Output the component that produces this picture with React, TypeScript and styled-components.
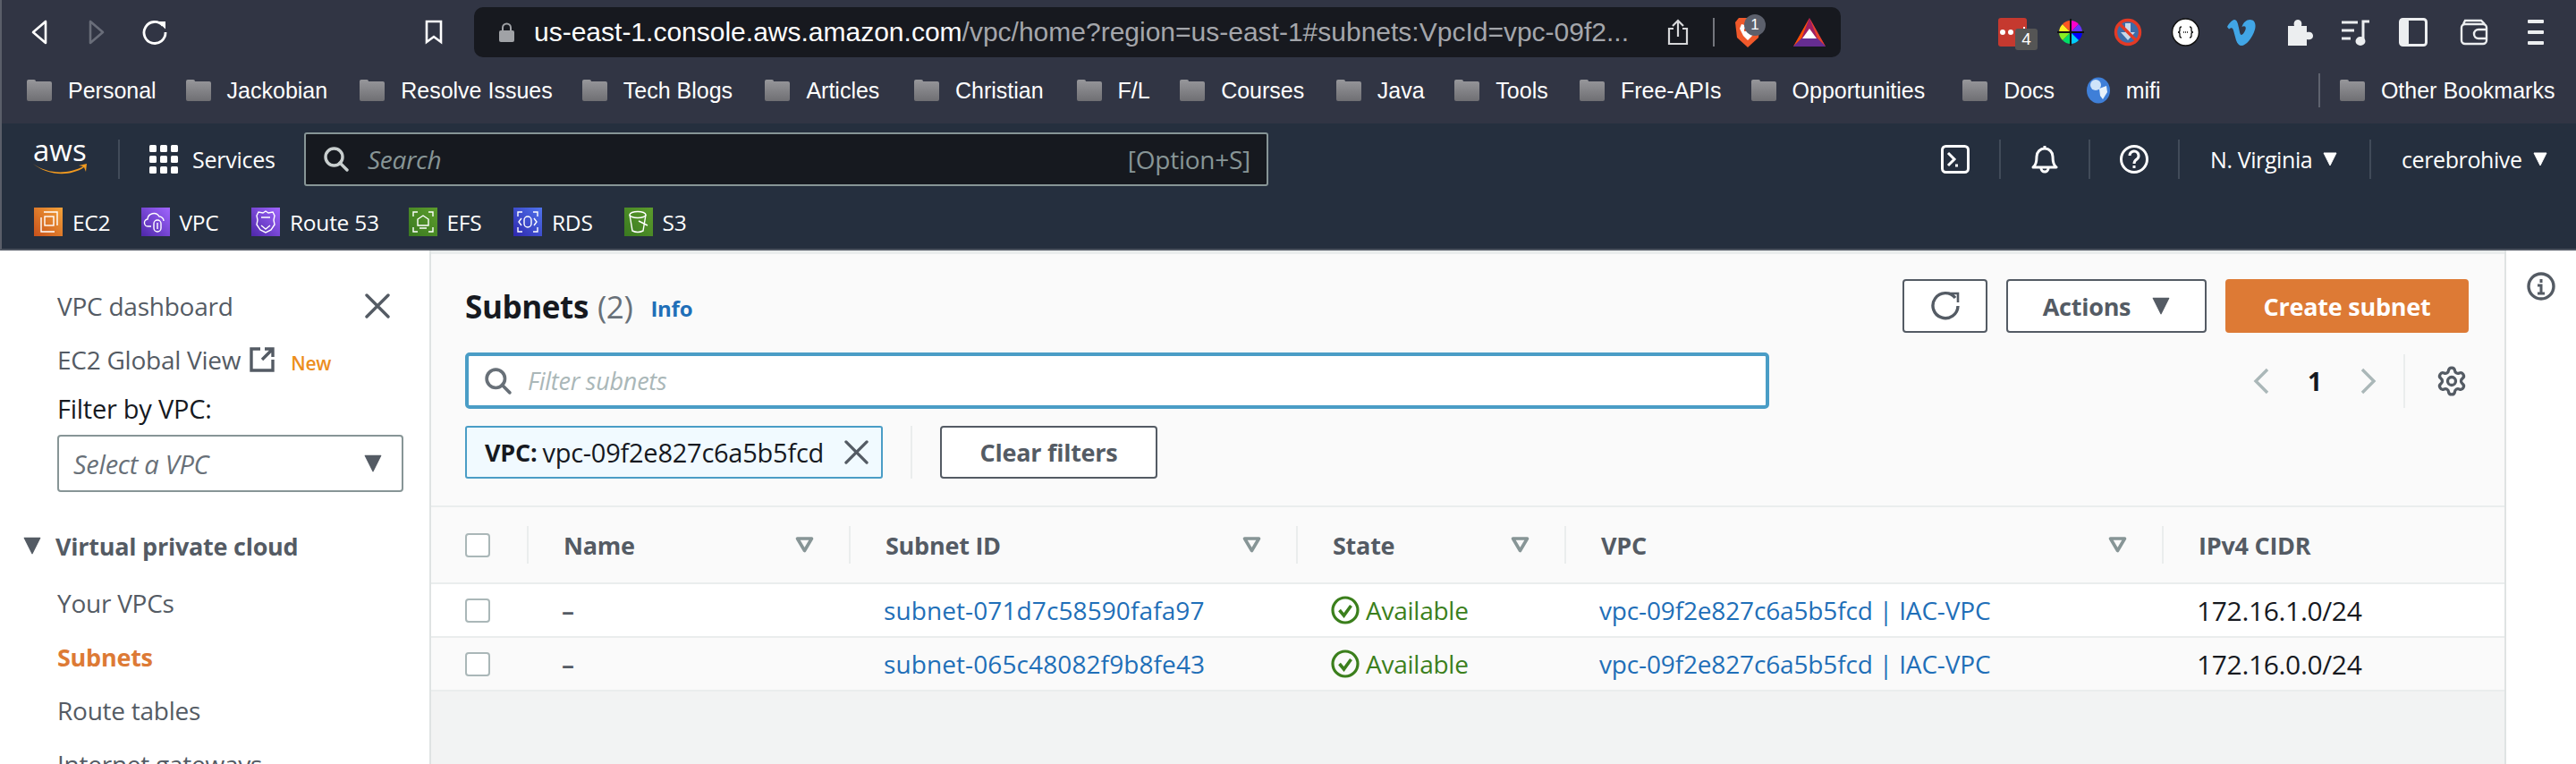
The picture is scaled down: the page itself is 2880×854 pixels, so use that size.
import { ReactElement, ReactNode } from 'react';
import { Settings } from 'lucide-react';
import styled, { createGlobalStyle } from 'styled-components';

const GlobalStyle = createGlobalStyle`
  html, body {
    margin: 0;
    padding: 0;
    background: #fff;
  }
  * {
    box-sizing: border-box;
  }
`;

const ui = `'Open Sans', 'Noto Sans', sans-serif`;
const chromeFont = `'Liberation Sans', Arial, sans-serif`;

const Page = styled.div`
  width: 2880px;
  height: 854px;
  overflow: hidden;
  display: flex;
  flex-direction: column;
  font-family: ${ui};
  font-size: 28px;
  letter-spacing: -0.25px;
  color: #16191f;
`;

/* browser chrome */
const BrowserChrome = styled.div`
  height: 138px;
  flex: none;
  background: #313544;
  border-left: 2px solid #5a5e69;
  display: flex;
  flex-direction: column;
`;

const Toolbar = styled.div`
  height: 64px;
  display: flex;
  align-items: flex-end;
  position: relative;
`;

const NavIcons = styled.div`
  width: 528px;
  height: 56px;
  flex: none;
  display: flex;
  align-items: center;
  padding-left: 32px;
  gap: 44px;
`;

const ReloadIcon = styled.svg`
  margin-left: -3px;
`;

const BookmarkIcon = styled.svg`
  margin-left: 243px;
`;

const UrlBar = styled.div`
  width: 1528px;
  height: 56px;
  flex: none;
  background: #17191f;
  border-radius: 10px;
  display: flex;
  align-items: center;
  padding-left: 28px;
  font-family: ${chromeFont};
  font-size: 30px;
  letter-spacing: 0;
  white-space: nowrap;
  color: #a4a6ab;

  b {
    font-weight: 400;
    color: #fff;
  }
`;

const UrlText = styled.span`
  margin-left: 22px;
  width: 1232px;
  flex: none;
`;

const UrlIcons = styled.div`
  display: flex;
  align-items: center;
  margin-left: 8px;
  height: 100%;
  position: relative;
`;

const ShareIcon = styled.svg`
  margin-left: 27px;
`;

const UrlDivider = styled.div`
  width: 2px;
  height: 32px;
  background: #74767d;
  margin: 0 22px 0 27px;
`;

const BraveBadge = styled.span`
  position: absolute;
  left: 113px;
  top: 8px;
  width: 24px;
  height: 24px;
  border-radius: 50%;
  background: #5c606c;
  color: #fff;
  font-size: 17px;
  line-height: 24px;
  text-align: center;
`;

const BatIcon = styled.svg`
  margin-left: 36px;
`;

const ExtIcons = styled.div`
  display: flex;
  align-items: center;
  height: 56px;
  padding-left: 176px;
`;

const ExtSlot = styled.div<{ $w: number }>`
  width: ${({ $w }) => $w}px;
  flex: none;
  display: flex;
  align-items: center;
  position: relative;
`;

const CountBadge = styled.span`
  position: absolute;
  left: 19px;
  top: 12px;
  width: 25px;
  height: 24px;
  background: #555;
  border-radius: 3px;
  color: #fff;
  font-family: ${chromeFont};
  font-size: 19px;
  line-height: 24px;
  text-align: center;
`;

const BookmarkBar = styled.div`
  height: 74px;
  display: flex;
  align-items: center;
  padding-left: 27px;
  gap: 34.600px;
  font-family: ${chromeFont};
  font-size: 25px;
  letter-spacing: 0;
  color: #fff;
`;

const Bookmark = styled.div`
  display: flex;
  align-items: center;
  gap: 17px;
  white-space: nowrap;
`;

const BookmarkName = styled.span<{ $w: number }>`
  width: ${({ $w }) => $w}px;
  flex: none;
`;

const BookmarkDivider = styled.div`
  width: 2px;
  height: 38px;
  background: #5e626e;
  margin-left: 140px;
  margin-right: -14px;
`;

/* aws console header */
const AwsHeader = styled.header`
  height: 142px;
  flex: none;
  background: #252f3e;
  border-left: 2px solid #5a5e69;
  border-bottom: 2px solid #4d5460;
  color: #fff;
  display: flex;
  flex-direction: column;
`;

const TopNav = styled.div`
  height: 80px;
  display: flex;
  align-items: center;
  padding-left: 34px;
`;

const AwsLogo = styled.div`
  width: 64px;
  height: 44px;
  position: relative;
  flex: none;
`;

const AwsWord = styled.span`
  position: absolute;
  left: 1px;
  top: -8px;
  font-size: 33px;
  line-height: 40px;
  letter-spacing: 0;
  color: #fff;
`;

const AwsSmile = styled.svg`
  position: absolute;
  left: 0;
  top: 24px;
`;

const NavDivider = styled.div<{ $ml?: number; $mr?: number }>`
  width: 2px;
  height: 44px;
  background: #414b59;
  flex: none;
  margin-left: ${({ $ml }) => $ml ?? 0}px;
  margin-right: ${({ $mr }) => $mr ?? 0}px;
`;

const ServicesLink = styled.div`
  display: flex;
  align-items: center;
  gap: 16px;
  font-size: 25px;
  width: 173px;
  flex: none;
`;

const SearchBox = styled.div`
  width: 1078px;
  height: 60px;
  flex: none;
  background: #16191f;
  border: 2px solid #879596;
  border-radius: 3px;
  display: flex;
  align-items: center;
  padding: 0 18px 0 20px;
  color: #879596;
`;

const SearchWord = styled.span`
  margin-left: 21px;
  font-style: italic;
`;

const Shortcut = styled.span`
  margin-left: auto;
`;

const NavRight = styled.div`
  display: flex;
  align-items: center;
  margin-left: 752px;
`;

const NavIconSlot = styled.div<{ $w: number }>`
  width: ${({ $w }) => $w}px;
  flex: none;
  display: flex;
  justify-content: center;
`;

const NavMenu = styled.div<{ $w: number; $pl: number }>`
  width: ${({ $w }) => $w}px;
  padding-left: ${({ $pl }) => $pl}px;
  flex: none;
  display: flex;
  align-items: center;
  gap: 12px;
  font-size: 25px;
  letter-spacing: -0.4px;
  white-space: nowrap;
`;

const Favorites = styled.div`
  height: 60px;
  display: flex;
  align-items: center;
  padding-left: 36px;
  gap: 36.500px;
  font-size: 24.500px;
`;

const Favorite = styled.div`
  display: flex;
  align-items: center;
  gap: 11px;
`;

const FavoriteName = styled.span<{ $w: number }>`
  width: ${({ $w }) => $w}px;
  flex: none;
  white-space: nowrap;
`;

const ServiceIcon = styled.div<{ $from: string; $to: string }>`
  width: 32px;
  height: 32px;
  flex: none;
  background: linear-gradient(45deg, ${({ $from }) => $from}, ${({ $to }) => $to});
  display: flex;
  align-items: center;
  justify-content: center;
`;

/* console body */
const Body = styled.div`
  flex: 1;
  min-height: 0;
  display: flex;
  background: #fff;
`;

const Sidebar = styled.nav`
  width: 482px;
  flex: none;
  background: #fff;
  border-right: 2px solid #dfe3e3;
  padding-top: 32px;
  color: #545b64;
  position: relative;
`;

const SideItem = styled.div<{ $active?: boolean }>`
  height: 60px;
  padding-left: 64px;
  display: flex;
  align-items: center;
  font-size: ${({ $active }) => ($active ? 27 : 28)}px;
  font-weight: ${({ $active }) => ($active ? 700 : 400)};
  color: ${({ $active }) => ($active ? '#dd7a35' : '#545b64')};
`;

const CloseX = styled.div`
  margin-left: auto;
  margin-right: 44px;
  display: flex;
`;

const ExternalWrap = styled.span`
  margin-left: 10px;
  display: flex;
`;

const NewTag = styled.span`
  margin-left: 18px;
  margin-top: 8px;
  color: #ec8e1e;
  font-size: 21px;
  font-weight: 600;
`;

const FilterLabel = styled.div`
  height: 48px;
  padding-left: 64px;
  display: flex;
  align-items: center;
  font-size: 29px;
  color: #16191f;
`;

const VpcSelect = styled.div`
  width: 387px;
  height: 64px;
  margin: 6px 0 30px 64px;
  border: 2px solid #879596;
  border-radius: 4px;
  display: flex;
  align-items: center;
  justify-content: space-between;
  padding: 0 22px 0 16px;
  font-size: 29px;
  font-style: italic;
  color: #687078;
`;

const SideGroup = styled.div`
  height: 60px;
  margin-bottom: 4px;
  padding-left: 26px;
  display: flex;
  align-items: center;
  gap: 16px;
  font-size: 27px;
  font-weight: 700;
  color: #545b64;
`;

const Main = styled.main`
  width: 2318px;
  flex: none;
  background: #f2f3f3;
  border-top: 4px solid #eaeded;
  display: flex;
  flex-direction: column;
`;

const MainHead = styled.div`
  height: 281px;
  flex: none;
  background: #fafafa;
  padding: 28px 40px 0 38px;
  display: flex;
  flex-direction: column;
`;

const TitleRow = styled.div`
  height: 60px;
  display: flex;
  align-items: center;
`;

const Title = styled.h1`
  margin: 0;
  font-size: 35px;
  font-weight: 700;
  letter-spacing: -0.4px;
  color: #16191f;

  span {
    font-weight: 400;
    color: #687078;
    margin-left: 10px;
  }
`;

const InfoLink = styled.a`
  margin: 4px 0 0 20px;
  font-size: 24px;
  font-weight: 700;
  color: #1f6fb8;
`;

const TitleActions = styled.div`
  margin-left: auto;
  display: flex;
  gap: 21px;
`;

const OutlineButton = styled.button<{ $w: number; $h?: number }>`
  width: ${({ $w }) => $w}px;
  height: ${({ $h }) => $h ?? 60}px;
  background: #fff;
  border: 2px solid #545b64;
  border-radius: 4px;
  display: flex;
  align-items: center;
  justify-content: center;
  gap: 24px;
  padding: 0;
  font-family: inherit;
  font-size: 27px;
  font-weight: 700;
  letter-spacing: -0.25px;
  color: #545b64;
`;

const PrimaryButton = styled(OutlineButton)`
  background: #dd7a35;
  border-color: #dd7a35;
  color: #fff;
`;

const FilterRow = styled.div`
  height: 63px;
  margin-top: 22px;
  display: flex;
  align-items: center;
`;

const FilterInput = styled.div`
  width: 1458px;
  height: 63px;
  flex: none;
  background: #fff;
  border: 4px solid #4a9dc6;
  border-radius: 5px;
  display: flex;
  align-items: center;
  gap: 18px;
  padding-left: 18px;
  font-size: 27px;
  font-style: italic;
  color: #aab7b8;
`;

const Pager = styled.div`
  margin-left: auto;
  padding-right: 1px;
  display: flex;
  align-items: center;
`;

const PageNum = styled.span`
  width: 102px;
  text-align: center;
  font-weight: 700;
`;

const PagerDivider = styled.div`
  width: 2px;
  height: 60px;
  background: #eaeded;
  margin: 0 34px 0 30px;
`;

const TokenRow = styled.div`
  height: 59px;
  margin-top: 19px;
  display: flex;
  align-items: center;
`;

const Token = styled.div`
  width: 467px;
  height: 59px;
  flex: none;
  background: #f1faff;
  border: 2px solid #4a9dc6;
  border-radius: 3px;
  display: flex;
  align-items: center;
  padding: 0 14px 0 20px;
  font-size: 29px;
  white-space: nowrap;

  b {
    font-size: 27px;
    margin-right: 6px;
  }

  svg {
    margin-left: auto;
  }
`;

const TokenDivider = styled.div`
  width: 2px;
  height: 59px;
  background: #eaeded;
  margin: 0 31px;
  flex: none;
`;

const columns = '107px 360px 500px 300px 668px 383px';

const TableHead = styled.div`
  height: 88px;
  flex: none;
  background: #fafafa;
  border-top: 2px solid #eaeded;
  border-bottom: 2px solid #eaeded;
  display: grid;
  grid-template-columns: ${columns};
  align-items: center;
  font-size: 27px;
  font-weight: 700;
  color: #545b64;
`;

const HeadCell = styled.div<{ $divider?: boolean }>`
  height: 42px;
  display: flex;
  align-items: center;
  justify-content: space-between;
  padding: 0 39px 0 39px;
  border-left: 2px solid ${({ $divider }) => ($divider ? '#eaeded' : 'transparent')};
  white-space: nowrap;
`;

const CheckCell = styled.div`
  padding-left: 38px;
  display: flex;
`;

const CheckBox = styled.div`
  width: 28px;
  height: 27px;
  background: #fff;
  border: 2px solid #aab7b8;
  border-radius: 4px;
`;

const Row = styled.div<{ $alt?: boolean }>`
  height: 60px;
  flex: none;
  background: ${({ $alt }) => ($alt ? '#fafafa' : '#fff')};
  border-bottom: 2px solid #eaeded;
  display: grid;
  grid-template-columns: ${columns};
  align-items: center;
`;

const Cell = styled.div`
  padding-left: 39px;
  display: flex;
  align-items: center;
  gap: 7px;
  white-space: nowrap;
`;

const Dash = styled.span`
  font-weight: 600;
  color: #545b64;
`;

const LinkText = styled.a<{ $spacing: number }>`
  letter-spacing: ${({ $spacing }) => $spacing}px;
  color: #1f6fb8;
`;

const Status = styled.span`
  color: #3b7f1c;
`;

const Cidr = styled.span`
  font-size: 30px;
  letter-spacing: -0.35px;
`;

const HelpRail = styled.aside`
  width: 80px;
  flex: none;
  background: #fff;
  border-left: 2px solid #dfe3e3;
  padding: 24px 0 0 23px;
`;

/* icons */
const Folder = (): ReactElement => (
  <svg width="30" height="26" viewBox="0 0 30 26">
    <defs>
      <linearGradient id="fold" x1="0" y1="0" x2="0" y2="1">
        <stop offset="0" stopColor="#97979b" />
        <stop offset="1" stopColor="#6f6f73" />
      </linearGradient>
    </defs>
    <path d="M1 3q0-2 2-2h6q2 0 2 2h16q2 0 2 2v18q0 2-2 2H3q-2 0-2-2z" fill="url(#fold)" />
  </svg>
);

const Globe = (): ReactElement => (
  <svg width="28" height="30" viewBox="0 0 28 30">
    <ellipse cx="14" cy="15" rx="13" ry="14.500" fill="#3f7fd8" />
    <ellipse cx="11" cy="9" rx="6" ry="6" fill="#cfe4fa" />
    <path d="M15 13l8-3 1 7-5 8-3-4z" fill="#e8f2fb" />
  </svg>
);

const Caret = ({ size = 16, color = '#fff' }: { size?: number; color?: string }): ReactElement => (
  <svg width={size} height={size} viewBox="0 0 16 16">
    <path d="M1 1h14L8 15z" fill={color} stroke={color} strokeLinejoin="round" />
  </svg>
);

const SearchGlass = ({ color, size = 28 }: { color: string; size?: number }): ReactElement => (
  <svg width={size} height={size} viewBox="0 0 28 28" fill="none" stroke={color} strokeWidth="3.400">
    <circle cx="11.500" cy="11.500" r="9.500" />
    <path d="M18 18l8 8" strokeLinecap="round" />
  </svg>
);

const CrossIcon = ({ size = 28 }: { size?: number }): ReactElement => (
  <svg width={size} height={size} viewBox="0 0 28 28" stroke="#545b64" strokeWidth="3.400" strokeLinecap="round">
    <path d="M2 2l24 24M26 2L2 26" />
  </svg>
);

const FilterTriangle = (): ReactElement => (
  <svg width="21" height="18" viewBox="0 0 21 18" fill="none">
    <path d="M2.500 2h16L10.500 15.500z" stroke="#879596" strokeWidth="3.600" strokeLinejoin="round" />
  </svg>
);

const CheckCircle = (): ReactElement => (
  <svg width="32" height="32" viewBox="0 0 32 32" fill="none" stroke="#3b7f1c" strokeWidth="3.200">
    <circle cx="16" cy="16" r="14" />
    <path d="M9.500 16l5 6 8-11" strokeWidth="3.600" />
  </svg>
);

const Chevron = ({ left }: { left?: boolean }): ReactElement => (
  <svg width="18" height="30" viewBox="0 0 18 30" fill="none" stroke="#aab7b8" strokeWidth="3.400">
    <path d={left ? 'M16 2L3 15l13 13' : 'M2 2l13 13L2 28'} />
  </svg>
);

const lineIcon = { fill: 'none', stroke: '#fff', strokeWidth: 1.4 };

const favorites: { name: string; w: number; from: string; to: string; art: ReactNode }[] = [
  {
    name: 'EC2',
    w: 40,
    from: '#c8511b',
    to: '#f4a33a',
    art: (
      <svg width="26" height="26" viewBox="0 0 26 26" {...lineIcon}>
        <rect x="9" y="7" width="10" height="10" />
        <path d="M8 2h15v15M5 8v16h15" />
      </svg>
    ),
  },
  {
    name: 'VPC',
    w: 44,
    from: '#4d27a8',
    to: '#a166ff',
    art: (
      <svg width="28" height="28" viewBox="0 0 28 28" {...lineIcon}>
        <path d="M9 19H6a4 4 0 0 1-1-8 7 7 0 0 1 13-3 5 5 0 0 1 5 5" />
        <rect x="12" y="12" width="8" height="13" rx="4" />
        <path d="M16 15v7" />
      </svg>
    ),
  },
  {
    name: 'Route 53',
    w: 96,
    from: '#4d27a8',
    to: '#a166ff',
    art: (
      <svg width="28" height="28" viewBox="0 0 28 28" {...lineIcon}>
        <path d="M14 2l3 2 5-1 2 4-1 5 1 5-4 6-6 3-6-3-4-6 1-5-1-5 2-4 5 1z" />
        <path d="M9 9h10M9 18l5 4 5-4" />
      </svg>
    ),
  },
  {
    name: 'EFS',
    w: 38,
    from: '#3a7a20',
    to: '#5c9c2c',
    art: (
      <svg width="28" height="28" viewBox="0 0 28 28" {...lineIcon}>
        <path d="M3 8V3h5M20 3h5v5M25 20v5h-5M8 25H3v-5" />
        <path d="M8 18v-7l6-4 6 4v7zM10 21h8" />
      </svg>
    ),
  },
  {
    name: 'RDS',
    w: 44,
    from: '#2e27ad',
    to: '#4f74ee',
    art: (
      <svg width="28" height="28" viewBox="0 0 28 28" {...lineIcon}>
        <path d="M3 8V3h5M20 3h5v5M25 20v5h-5M8 25H3v-5" />
        <rect x="10" y="8" width="8" height="12" rx="4" />
        <path d="M7 10l-3 4 3 4M21 10l3 4-3 4" />
      </svg>
    ),
  },
  {
    name: 'S3',
    w: 25,
    from: '#3a7a20',
    to: '#5c9c2c',
    art: (
      <svg width="26" height="28" viewBox="0 0 26 28" {...lineIcon}>
        <ellipse cx="12" cy="6" rx="9" ry="3.500" />
        <path d="M3 6l3 18q6 3 12 0l3-18M13 13l10 5" />
      </svg>
    ),
  },
];

const bookmarks = [
  { name: 'Personal', w: 96 },
  { name: 'Jackobian', w: 113 },
  { name: 'Resolve Issues', w: 167 },
  { name: 'Tech Blogs', w: 123 },
  { name: 'Articles', w: 85 },
  { name: 'Christian', w: 100 },
  { name: 'F/L', w: 34 },
  { name: 'Courses', w: 93 },
  { name: 'Java', w: 51 },
  { name: 'Tools', w: 58 },
  { name: 'Free-APIs', w: 110 },
  { name: 'Opportunities', w: 155 },
  { name: 'Docs', w: 57 },
];

const App = (): ReactElement => {
  return (
    <Page>
      <GlobalStyle />
      <BrowserChrome>
        <Toolbar>
          <NavIcons>
            <svg width="20" height="28" viewBox="0 0 20 28" fill="none" stroke="#fff" strokeWidth="2.600" strokeLinejoin="round">
              <path d="M17 2v24L3 14z" />
            </svg>
            <svg width="20" height="28" viewBox="0 0 20 28" fill="none" stroke="#696d79" strokeWidth="2.600" strokeLinejoin="round">
              <path d="M3 2v24l14-12z" />
            </svg>
            <ReloadIcon width="28" height="28" viewBox="0 0 28 28" fill="none" stroke="#fff" strokeWidth="2.800">
              <path d="M23 6.500A12 12 0 1 0 26 14" />
              <path d="M17 2h9v8.500z" fill="#fff" stroke="none" />
            </ReloadIcon>
            <BookmarkIcon width="22" height="28" viewBox="0 0 22 28" fill="none" stroke="#fff" strokeWidth="2.600">
              <path d="M3 2h16v23l-8-6-8 6z" />
            </BookmarkIcon>
          </NavIcons>
          <UrlBar>
            <svg width="17" height="22" viewBox="0 0 17 22">
              <path d="M4 9V6a4.500 4.500 0 0 1 9 0v3" fill="none" stroke="#a0a2a6" strokeWidth="2" />
              <rect x="0" y="9" width="17" height="13" rx="2" fill="#a0a2a6" />
            </svg>
            <UrlText>
              <b>us-east-1.console.aws.amazon.com</b>/vpc/home?region=us-east-1#subnets:VpcId=vpc-09f2...
            </UrlText>
            <UrlIcons>
              <ShareIcon width="24" height="30" viewBox="0 0 24 30" fill="none" stroke="#d6d7d9" strokeWidth="2.200">
                <path d="M7 11H2v17h20V11h-5M12 20V2M6 8l6-6 6 6" />
              </ShareIcon>
              <UrlDivider />
              <svg width="30" height="36" viewBox="0 0 30 36">
                <path d="M5 2h20l4 5-2 17-12 11L3 24 1 7z" fill="#f0592b" />
                <path d="M8 9l7 2 7-2 2 5-4 8-5 5-5-5-4-8z" fill="#fff" />
                <path d="M11 14h2v3h-2zM17 14h2v3h-2z" fill="#f0592b" />
              </svg>
              <BraveBadge>1</BraveBadge>
              <BatIcon width="36" height="32" viewBox="0 0 36 32">
                <path d="M18 0L0 32h36z" fill="#9e1f63" />
                <path d="M18 0L0 32l9-9z" fill="#ff5000" />
                <path d="M18 0l18 32-9-9z" fill="#e8412a" />
                <path d="M0 32h36l-9-9H9z" fill="#662d91" />
                <path d="M18 12l-8 11h16z" fill="#fff" />
              </BatIcon>
            </UrlIcons>
          </UrlBar>
          <ExtIcons>
            <ExtSlot $w={65}>
              <svg width="32" height="32" viewBox="0 0 32 32">
                <rect width="32" height="32" rx="3" fill="#c5392f" />
                <circle cx="5" cy="16" r="3" fill="#fff" />
                <circle cx="14" cy="16" r="3" fill="#fff" />
                <circle cx="22" cy="16" r="3" fill="#fff" />
                <rect x="28" y="10" width="2" height="12" fill="#fff" />
              </svg>
              <CountBadge>4</CountBadge>
            </ExtSlot>
            <ExtSlot $w={64}>
              <svg width="32" height="32" viewBox="0 0 32 32">
                <path d="M16 16L16 3a13 13 0 0 1 9 4z" fill="#f0c" />
                <path d="M16 16l9-9a13 13 0 0 1 4 9z" fill="#63f" />
                <path d="M16 16h13a13 13 0 0 1-4 9z" fill="#00f" />
                <path d="M16 16l9 9a13 13 0 0 1-9 4z" fill="#0cf" />
                <path d="M16 16v13a13 13 0 0 1-9-4z" fill="#0d6" />
                <path d="M16 16l-9 9a13 13 0 0 1-4-9z" fill="#8e2" />
                <path d="M16 16H3a13 13 0 0 1 4-9z" fill="#fe2" />
                <path d="M16 16L7 7a13 13 0 0 1 9-4z" fill="#f52" />
                <path d="M16 1v30M1 16h30" stroke="#111" strokeWidth="2" />
              </svg>
            </ExtSlot>
            <ExtSlot $w={65}>
              <svg width="32" height="32" viewBox="0 0 32 32">
                <circle cx="16" cy="16" r="13" fill="#3d6ca8" />
                <path d="M13 6h6v10h5l-8 9-8-9h5z" fill="#c8d8ea" />
                <circle cx="16" cy="16" r="13.500" fill="none" stroke="#e33a25" strokeWidth="3.400" />
                <path d="M7 7l18 18" stroke="#e33a25" strokeWidth="3.400" />
              </svg>
            </ExtSlot>
            <ExtSlot $w={62}>
              <svg width="31" height="32" viewBox="0 0 31 32">
                <circle cx="15.500" cy="16" r="15" fill="#fff" stroke="#111" strokeWidth="1.500" />
                <path d="M11 10q-2 0-2 2v2q0 2-2 2 2 0 2 2v2q0 2 2 2M20 10q2 0 2 2v2q0 2 2 2-2 0-2 2v2q0 2-2 2" fill="none" stroke="#111" strokeWidth="1.300" />
                <path d="M13 16h1M15 16h1M17 16h1" stroke="#111" strokeWidth="1.300" />
              </svg>
            </ExtSlot>
            <ExtSlot $w={66}>
              <svg width="32" height="30" viewBox="0 0 32 30">
                <path d="M0 9l2 2.500c3-2 4-2 5 1.500l3 11c1.500 4 3.500 6 6 6 5 0 12-8 15-18 1.500-6 0-11-5.500-11-4 0-7.500 3-9 8 3-1.500 5-.5 4 3-.5 2-3 6-4.500 6-1.500 0-2-3-3-8C12 5 11 1 8 1 6 1 2 5 0 9z" fill="#41a6e6" />
              </svg>
            </ExtSlot>
            <ExtSlot $w={62}>
              <svg width="30" height="32" viewBox="0 0 30 32">
                <path d="M2 9h7c-1-3 0-7 4-7s5 4 4 7h6v7c3-1 7 0 7 4s-4 5-7 4v7H2z" fill="#eceef0" />
              </svg>
            </ExtSlot>
            <ExtSlot $w={64}>
              <svg width="32" height="30" viewBox="0 0 32 30" fill="none" stroke="#eceef0" strokeWidth="3">
                <path d="M0 4h18M0 13h14M0 22h10" />
                <path d="M24 24V3h7" />
                <ellipse cx="21" cy="25" rx="4" ry="3.500" fill="#eceef0" />
              </svg>
            </ExtSlot>
            <ExtSlot $w={68}>
              <svg width="32" height="32" viewBox="0 0 32 32">
                <rect x="1.500" y="1.500" width="29" height="29" rx="3" fill="none" stroke="#eceef0" strokeWidth="3" />
                <rect x="1" y="1" width="10" height="30" rx="3" fill="#eceef0" />
              </svg>
            </ExtSlot>
            <ExtSlot $w={76}>
              <svg width="32" height="30" viewBox="0 0 32 30" fill="none" stroke="#eceef0" strokeWidth="2.400">
                <rect x="2" y="6" width="28" height="22" rx="4" />
                <path d="M4 6l2-4h18l4 4M30 12H21a5 5 0 0 0 0 10h9" />
              </svg>
            </ExtSlot>
            <ExtSlot $w={18}>
              <svg width="18" height="28" viewBox="0 0 18 28" fill="#eceef0">
                <rect width="18" height="4" rx="1" />
                <rect y="12" width="18" height="4" rx="1" />
                <rect y="24" width="18" height="4" rx="1" />
              </svg>
            </ExtSlot>
          </ExtIcons>
        </Toolbar>
        <BookmarkBar>
          {bookmarks.map((b) => (
            <Bookmark key={b.name}>
              <Folder />
              <BookmarkName $w={b.w}>{b.name}</BookmarkName>
            </Bookmark>
          ))}
          <Bookmark>
            <Globe />
            <BookmarkName $w={41}>mifi</BookmarkName>
          </Bookmark>
          <BookmarkDivider />
          <Bookmark>
            <Folder />
            <BookmarkName $w={196}>Other Bookmarks</BookmarkName>
          </Bookmark>
        </BookmarkBar>
      </BrowserChrome>

      <AwsHeader>
        <TopNav>
          <AwsLogo>
            <AwsWord>aws</AwsWord>
            <AwsSmile width="64" height="16" viewBox="0 0 64 16">
              <path d="M1 3c16 12 40 12 56 3l-5-1 9-2-1 9-2-5C42 18 16 16 1 3z" fill="#f29a1f" />
            </AwsSmile>
          </AwsLogo>
          <NavDivider $ml={32} $mr={33} />
          <ServicesLink>
            <svg width="32" height="32" viewBox="0 0 32 32" fill="#fff">
              {[0, 12, 24].flatMap((y) =>
                [0, 12, 24].map((x) => <rect key={`${x}-${y}`} x={x} y={y} width="8" height="8" rx="1.500" />),
              )}
            </svg>
            Services
          </ServicesLink>
          <SearchBox>
            <SearchGlass color="#c9cfcf" />
            <SearchWord>Search</SearchWord>
            <Shortcut>[Option+S]</Shortcut>
          </SearchBox>
          <NavRight>
            <svg width="32" height="32" viewBox="0 0 32 32" fill="none" stroke="#fff" strokeWidth="3">
              <rect x="1.500" y="1.500" width="29" height="29" rx="4" />
              <path d="M8 9l7 7-7 7M16 23h3" />
            </svg>
            <NavDivider $ml={33} />
            <NavIconSlot $w={98}>
              <svg width="32" height="32" viewBox="0 0 32 32" fill="none" stroke="#fff" strokeWidth="3">
                <path d="M3 25c3-2 4-6 4-12 0-5 4-9 9-9s9 4 9 9c0 6 1 10 4 12z" strokeLinejoin="round" />
                <path d="M12 26a4 4 0 0 0 8 0M16 1v3" />
              </svg>
            </NavIconSlot>
            <NavDivider />
            <NavIconSlot $w={98}>
              <svg width="32" height="32" viewBox="0 0 32 32" fill="none" stroke="#fff" strokeWidth="3">
                <circle cx="16" cy="16" r="14.500" />
                <path d="M11 12a5 5 0 1 1 8 4c-2 1.500-3 2-3 5" />
                <path d="M16 23v3" />
              </svg>
            </NavIconSlot>
            <NavDivider />
            <NavMenu $w={212} $pl={34}>
              N. Virginia
              <Caret />
            </NavMenu>
            <NavDivider />
            <NavMenu $w={200} $pl={34}>
              cerebrohive
              <Caret />
            </NavMenu>
          </NavRight>
        </TopNav>
        <Favorites>
          {favorites.map((f) => (
            <Favorite key={f.name}>
              <ServiceIcon $from={f.from} $to={f.to}>
                {f.art}
              </ServiceIcon>
              <FavoriteName $w={f.w}>{f.name}</FavoriteName>
            </Favorite>
          ))}
        </Favorites>
      </AwsHeader>

      <Body>
        <Sidebar>
          <SideItem>
            VPC dashboard
            <CloseX>
              <CrossIcon />
            </CloseX>
          </SideItem>
          <SideItem>
            EC2 Global View
            <ExternalWrap>
              <svg width="28" height="28" viewBox="0 0 28 28" fill="none" stroke="#545b64" strokeWidth="3.400">
                <path d="M12 2H2v24h24V14M14 14L26 2M17 2h9v9" />
              </svg>
            </ExternalWrap>
            <NewTag>New</NewTag>
          </SideItem>
          <FilterLabel>Filter by VPC:</FilterLabel>
          <VpcSelect>
            Select a VPC
            <Caret size={20} color="#545b64" />
          </VpcSelect>
          <SideGroup>
            <Caret size={20} color="#545b64" />
            Virtual private cloud
          </SideGroup>
          <SideItem>Your VPCs</SideItem>
          <SideItem $active>Subnets</SideItem>
          <SideItem>Route tables</SideItem>
          <SideItem>Internet gateways</SideItem>
        </Sidebar>

        <Main>
          <MainHead>
            <TitleRow>
              <Title>
                Subnets<span>(2)</span>
              </Title>
              <InfoLink>Info</InfoLink>
              <TitleActions>
                <OutlineButton $w={95}>
                  <svg width="34" height="34" viewBox="0 0 34 34" fill="none" stroke="#545b64" strokeWidth="3.400">
                    <path d="M28 8a14 14 0 1 0 3 9" />
                    <path d="M21 3h10v10" strokeWidth="2.600" />
                  </svg>
                </OutlineButton>
                <OutlineButton $w={224}>
                  Actions
                  <Caret size={20} color="#545b64" />
                </OutlineButton>
                <PrimaryButton $w={272}>Create subnet</PrimaryButton>
              </TitleActions>
            </TitleRow>
            <FilterRow>
              <FilterInput>
                <SearchGlass color="#687078" size={30} />
                Filter subnets
              </FilterInput>
              <Pager>
                <Chevron left />
                <PageNum>1</PageNum>
                <Chevron />
                <PagerDivider />
                <Settings size={36} color="#545b64" strokeWidth={2.2} />
              </Pager>
            </FilterRow>
            <TokenRow>
              <Token>
                <b>VPC:</b> vpc-09f2e827c6a5b5fcd
                <CrossIcon size={27} />
              </Token>
              <TokenDivider />
              <OutlineButton $w={243} $h={59}>
                Clear filters
              </OutlineButton>
            </TokenRow>
          </MainHead>

          <TableHead>
            <CheckCell>
              <CheckBox />
            </CheckCell>
            <HeadCell $divider>
              Name
              <FilterTriangle />
            </HeadCell>
            <HeadCell $divider>
              Subnet ID
              <FilterTriangle />
            </HeadCell>
            <HeadCell $divider>
              State
              <FilterTriangle />
            </HeadCell>
            <HeadCell $divider>
              VPC
              <FilterTriangle />
            </HeadCell>
            <HeadCell $divider>IPv4 CIDR</HeadCell>
          </TableHead>
          {[
            { id: 'subnet-071d7c58590fafa97', cidr: '172.16.1.0/24' },
            { id: 'subnet-065c48082f9b8fe43', cidr: '172.16.0.0/24' },
          ].map((r, i) => (
            <Row key={r.id} $alt={i === 1}>
              <CheckCell>
                <CheckBox />
              </CheckCell>
              <Cell>
                <Dash>–</Dash>
              </Cell>
              <Cell>
                <LinkText $spacing={0.1}>{r.id}</LinkText>
              </Cell>
              <Cell>
                <CheckCircle />
                <Status>Available</Status>
              </Cell>
              <Cell>
                <LinkText $spacing={-0.15}>vpc-09f2e827c6a5b5fcd | IAC-VPC</LinkText>
              </Cell>
              <Cell>
                <Cidr>{r.cidr}</Cidr>
              </Cell>
            </Row>
          ))}
        </Main>

        <HelpRail>
          <svg width="32" height="32" viewBox="0 0 32 32" fill="none" stroke="#545b64" strokeWidth="3.400">
            <circle cx="16" cy="16" r="14" />
            <path d="M16 8v4M12 15h4v9M12 24h8" strokeWidth="3" />
          </svg>
        </HelpRail>
      </Body>
    </Page>
  );
};

export default App;
